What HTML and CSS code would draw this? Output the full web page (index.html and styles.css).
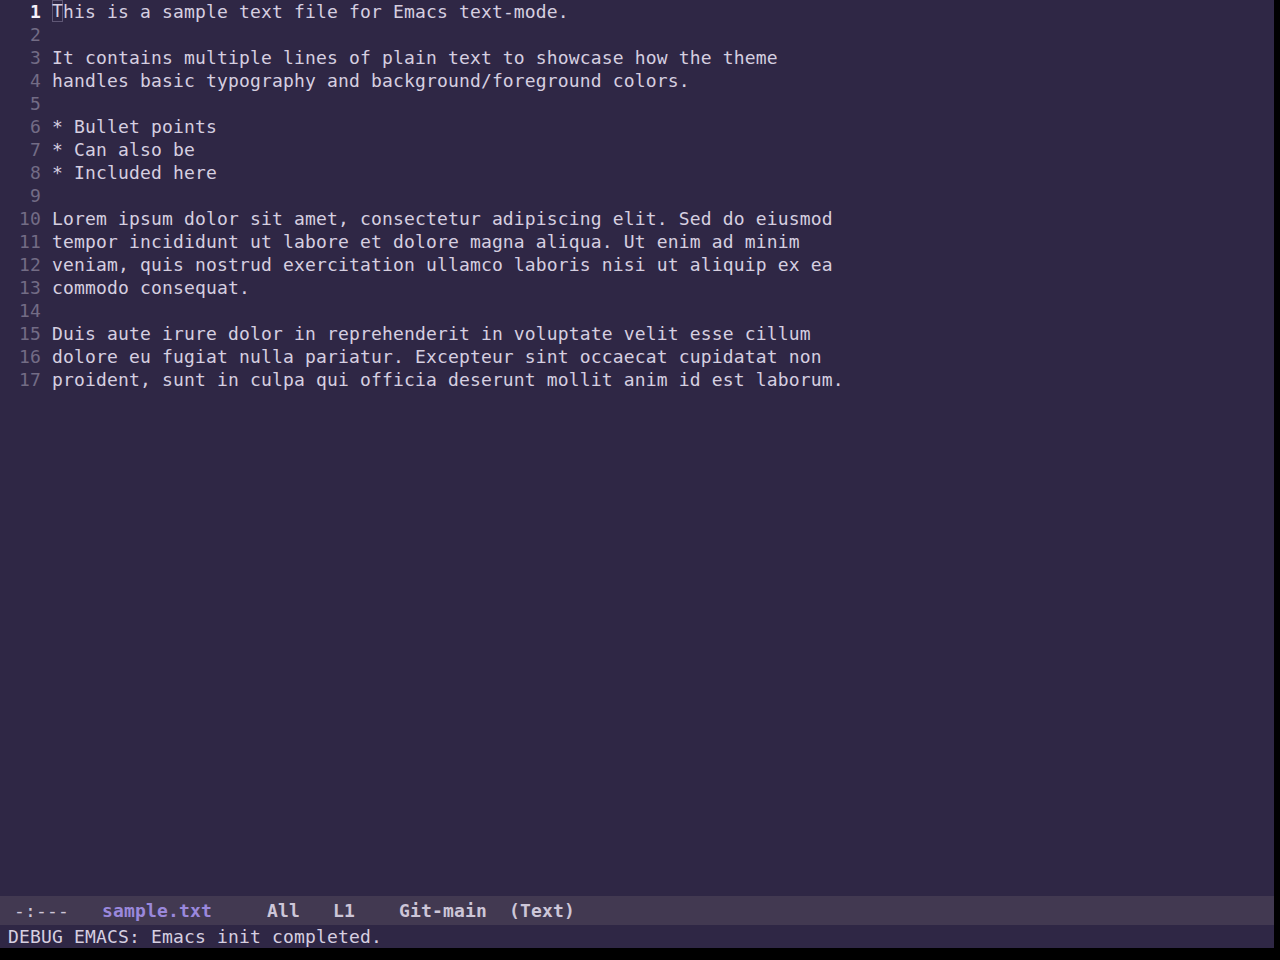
FILE: index.html
```html
<!DOCTYPE html>
<html>
<head>
<meta charset="utf-8">
<link rel="stylesheet" href="styles.css">
</head>
<body>
<div class="frame">
  <div class="buffer">
    <div class="line current"><span class="ln">1</span><span class="txt"><span class="cursor">T</span>his is a sample text file for Emacs text-mode.</span></div>
    <div class="line"><span class="ln">2</span><span class="txt"></span></div>
    <div class="line"><span class="ln">3</span><span class="txt">It contains multiple lines of plain text to showcase how the theme</span></div>
    <div class="line"><span class="ln">4</span><span class="txt">handles basic typography and background/foreground colors.</span></div>
    <div class="line"><span class="ln">5</span><span class="txt"></span></div>
    <div class="line"><span class="ln">6</span><span class="txt">* Bullet points</span></div>
    <div class="line"><span class="ln">7</span><span class="txt">* Can also be</span></div>
    <div class="line"><span class="ln">8</span><span class="txt">* Included here</span></div>
    <div class="line"><span class="ln">9</span><span class="txt"></span></div>
    <div class="line"><span class="ln">10</span><span class="txt">Lorem ipsum dolor sit amet, consectetur adipiscing elit. Sed do eiusmod</span></div>
    <div class="line"><span class="ln">11</span><span class="txt">tempor incididunt ut labore et dolore magna aliqua. Ut enim ad minim</span></div>
    <div class="line"><span class="ln">12</span><span class="txt">veniam, quis nostrud exercitation ullamco laboris nisi ut aliquip ex ea</span></div>
    <div class="line"><span class="ln">13</span><span class="txt">commodo consequat.</span></div>
    <div class="line"><span class="ln">14</span><span class="txt"></span></div>
    <div class="line"><span class="ln">15</span><span class="txt">Duis aute irure dolor in reprehenderit in voluptate velit esse cillum</span></div>
    <div class="line"><span class="ln">16</span><span class="txt">dolore eu fugiat nulla pariatur. Excepteur sint occaecat cupidatat non</span></div>
    <div class="line"><span class="ln">17</span><span class="txt">proident, sunt in culpa qui officia deserunt mollit anim id est laborum.</span></div>
  </div>
  <div class="modeline"><span class="ml-status">-:---</span>   <span class="ml-buf">sample.txt</span>     <span class="ml-b">All</span>   <span class="ml-b">L1</span>    <span class="ml-b">Git-main</span>  <span class="ml-b">(Text)</span></div>
  <div class="echo">DEBUG EMACS: Emacs init completed.</div>
</div>
</body>
</html>
```

FILE: styles.css
```css
html, body {
  margin: 0;
  padding: 0;
  background: #000000;
}

body {
  width: 1280px;
  height: 960px;
  overflow: hidden;
  font-family: "DejaVu Sans Mono", monospace;
  font-size: 18px;
  letter-spacing: 0.16px;
}

.frame {
  width: 1274px;
  height: 948px;
  background: #2f2745;
  display: flex;
  flex-direction: column;
}

.buffer {
  flex: 1;
  padding-left: 8px;
}

.line {
  display: flex;
  height: 23px;
  line-height: 23px;
  white-space: pre;
  color: #d6cfe0;
}

.ln {
  width: 44px;
  padding-right: 11px;
  box-sizing: border-box;
  text-align: right;
  color: #736c85;
  flex: none;
}

.current .ln {
  color: #f4f0fa;
  font-weight: bold;
}

.cursor {
  display: inline-block;
  height: 22px;
  line-height: 22px;
  vertical-align: top;
  box-shadow: inset 0 0 0 1px #5f5775;
}

.modeline {
  height: 29px;
  line-height: 29px;
  background: #423951;
  color: #cdc6d8;
  white-space: pre;
  padding-left: 14px;
}

.ml-status {
  color: #cdc6d8;
}

.ml-buf {
  color: #9a88dc;
  font-weight: bold;
}

.ml-b {
  font-weight: bold;
}

.echo {
  height: 23px;
  line-height: 23px;
  padding-left: 8px;
  white-space: pre;
  color: #d6cfe0;
  background: #2f2745;
}
```
